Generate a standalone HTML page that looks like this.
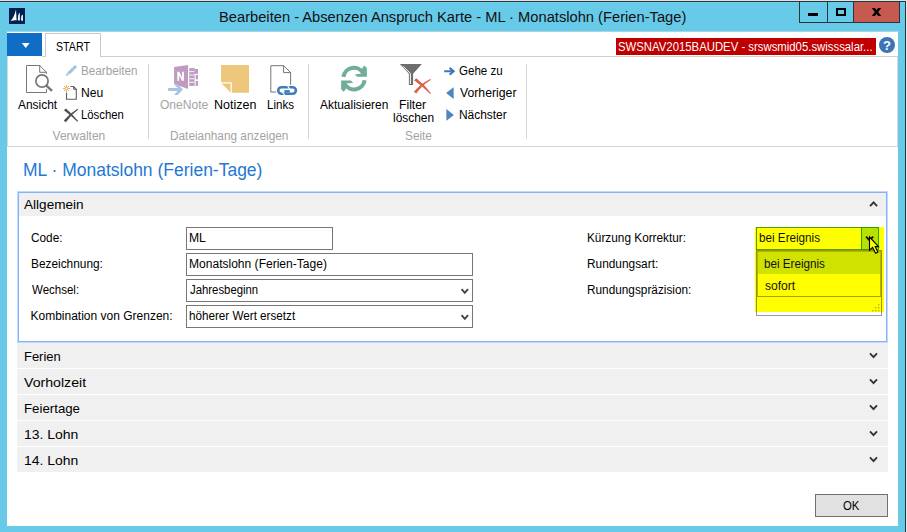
<!DOCTYPE html>
<html><head><meta charset="utf-8"><title>NAV</title><style>
html,body{margin:0;padding:0}
body{width:907px;height:532px;overflow:hidden;background:#67cae9;position:relative;font-family:"Liberation Sans",sans-serif}
div,span,svg{position:absolute;box-sizing:border-box}
.t{white-space:pre;line-height:20px;transform-origin:0 0;font-family:"Liberation Sans",sans-serif}
.sep{width:1px;top:64px;height:75px;background:#d6d6d6}
.inp{border:1px solid #767676;background:#fff;height:23px}
.band{left:17px;width:871px;height:25px;background:#f0f0f0}
</style></head><body>
<!-- window frame -->
<div style="left:0;top:0;width:907px;height:1px;background:#d7e5ea"></div>
<div style="left:0;top:1px;width:906px;height:1px;background:#2e3436"></div>
<div style="left:0;top:2px;width:905px;height:1px;background:#6fd2f1"></div>
<div style="left:905px;top:1px;width:1px;height:531px;background:#2e3436"></div>
<div style="left:906px;top:0;width:1px;height:532px;background:#e4e9ea"></div>

<!-- app icon -->
<svg style="left:9px;top:8px" width="16" height="16" viewBox="0 0 16 16">
 <rect width="16" height="16" fill="#002050"/>
 <path d="M1.2,13.2 C4,11 6,6 7,1.2 L7.6,12.2 C5,12.2 3,12.6 1.2,13.2 Z" fill="#fff"/>
 <path d="M8.8,12.3 L9.2,7.4 C9.6,6.2 10.2,5 10.7,4.4 L10.9,12.4 Z" fill="#fff"/>
 <path d="M12,12.6 L12.3,8.6 C12.7,7.8 13.3,7 13.8,6.6 L14,12.8 Z" fill="#fff"/>
</svg>

<!-- window controls -->
<div style="left:799px;top:2px;width:101px;height:21px;border:1px solid #2e3436;border-top:none;background:#67cae9"></div>
<div style="left:827px;top:2px;width:1px;height:20px;background:#2e3436"></div>
<div style="left:853px;top:2px;width:1px;height:20px;background:#2e3436"></div>
<div style="left:854px;top:2px;width:45px;height:20px;background:#c65a50"></div>
<div style="left:808px;top:13px;width:10px;height:3px;background:#000"></div>
<div style="left:836px;top:8px;width:10px;height:8px;border:2px solid #000"></div>
<svg style="left:870px;top:6px" width="14" height="12" viewBox="870 6 14 12"><path d="M871.8,8 H875 L876.5,10.2 L878,8 H881.2 L878.2,12 L881.2,16 H878 L876.5,13.8 L875,16 H871.8 L874.8,12 Z" fill="#000"/></svg>

<!-- client area -->
<div style="left:7px;top:31px;width:892px;height:1px;background:#a9d5e4"></div>
<div style="left:7px;top:32px;width:891px;height:494px;background:#fff"></div>
<div style="left:7px;top:56px;width:1px;height:91px;background:#d8d8d8"></div>
<div style="left:897px;top:56px;width:1px;height:91px;background:#d8d8d8"></div>

<!-- app button + tab -->
<div style="left:7px;top:33px;width:35px;height:23px;background:#0f6dc6"></div>
<svg style="left:20px;top:41px" width="12" height="9" viewBox="0 0 12 9"><path d="M1.8,2 L9.6,2 L5.7,7 Z" fill="#fff"/></svg>
<div style="left:42px;top:56px;width:856px;height:1px;background:#cfcfcf"></div>
<div style="left:45px;top:33px;width:56px;height:24px;border:1px solid #c9c9c9;border-bottom:none;background:#fff"></div>

<!-- red label + help -->
<div style="left:616px;top:38px;width:260px;height:17px;background:#c00000"></div>
<svg style="left:878px;top:36px" width="18" height="18" viewBox="0 0 18 18"><circle cx="9" cy="9" r="8" fill="#3d74b5"/>
<text x="9" y="13.6" font-family="Liberation Sans" font-weight="bold" font-size="13" fill="#fff" text-anchor="middle">?</text></svg>

<!-- ribbon -->
<div class="sep" style="left:148px"></div>
<div class="sep" style="left:308px"></div>
<div class="sep" style="left:526px"></div>
<div style="left:7px;top:146px;width:891px;height:1px;background:#d4d4d4"></div>

<!-- Ansicht icon -->
<svg style="left:24px;top:63px" width="32" height="32" viewBox="24 63 32 32">
 <path d="M46.5,73.8 V72.3 L39.7,65.5 H26.5 V92.5 H46.5 V89" fill="none" stroke="#767676" stroke-width="1"/>
 <path d="M39.7,65.5 V72.3 H46.5" fill="none" stroke="#767676" stroke-width="1"/>
 <circle cx="42" cy="81" r="6.1" fill="#fff" stroke="#767676" stroke-width="1.7"/>
 <path d="M46.4,85.6 L52,90.8" stroke="#767676" stroke-width="2.4" fill="none"/>
</svg>
<!-- pencil -->
<svg style="left:64px;top:64px" width="14" height="14" viewBox="64 64 14 14">
 <path d="M65.7,76.1 L66.9,72.8 L69.1,75 Z" fill="#a4c2e3"/>
 <path d="M68.4,73.5 L73.4,68.7" stroke="#a4c2e3" stroke-width="3.1" fill="none"/>
 <path d="M74.4,67.7 L75.2,66.95" stroke="#a4c2e3" stroke-width="3.1" fill="none" stroke-linecap="round"/>
</svg>
<!-- new -->
<svg style="left:62px;top:84px" width="17" height="17" viewBox="62 84 17 17">
 <path d="M66.5,92.6 V99.3 H76.3 V89.3 L73.6,86.5 H70.4" fill="none" stroke="#5f5f5f" stroke-width="1.1"/>
 <path d="M73.6,86.5 V89.3 H76.3" fill="none" stroke="#5f5f5f" stroke-width="1"/>
 <g stroke="#f0ad55" stroke-width="1" fill="none">
  <path d="M66.5,85 V92 M63,88.5 H70 M64,86 L69,91 M69,86 L64,91"/>
 </g>
 <circle cx="66.5" cy="88.5" r="1" fill="#fff"/>
</svg>
<!-- delete X -->
<svg style="left:62px;top:107px" width="18" height="16" viewBox="62 107 18 16">
 <path d="M63.9,110.3 L65.9,108.5 Q72.5,114 78.1,121.1 L77.3,121.8 Q71,115.6 63.9,110.3 Z" fill="#505050"/>
 <path d="M77.5,108.8 L78.3,109.6 Q71,114.8 65.9,122.2 L63.7,120.4 Q69.6,113.6 77.5,108.8 Z" fill="#505050"/>
</svg>
<!-- OneNote -->
<svg style="left:166px;top:63px" width="34" height="34" viewBox="166 63 34 34">
 <path d="M174.1,67.1 L188,64.9 V88.9 L174.1,84 Z" fill="#bf9bc1"/>
 <path d="M177.3,80.8 V71.8 H179.3 L182,77.4 V71.8 H183.9 V80.8 H181.9 L179.2,75.2 V80.8 Z" fill="#fff"/>
 <rect x="189.2" y="68.1" width="5.6" height="17.8" fill="#bf9bc1"/>
 <rect x="194.8" y="69" width="3.2" height="16.9" fill="#bf9bc1"/>
 <g fill="#fff"><rect x="189.2" y="71.2" width="5.2" height="0.9"/><rect x="189.2" y="74.6" width="5.2" height="0.9"/><rect x="189.2" y="78.3" width="5.2" height="0.9"/><rect x="189.2" y="81.8" width="5.2" height="0.9"/>
 <rect x="194.8" y="73.9" width="3.4" height="1.1"/><rect x="194.8" y="79.3" width="3.4" height="1.6"/><rect x="194.7" y="73.9" width="1" height="12"/></g>
 <path d="M168.1,88 H177.5 L174,84.2 H177.6 L183,89.6 L177.6,95 H174 L177.5,91.1 H168.1 Z" fill="#a9c4e0"/>
</svg>
<!-- Notizen -->
<svg style="left:220px;top:64px" width="30" height="30" viewBox="220 64 30 30">
 <path d="M221.1,65 H249 V92.7 H231.8 V82.2 H221.1 Z" fill="#edc77b"/>
 <path d="M221.6,83.6 H230.6 V92.6 Z" fill="#edc77b"/>
</svg>
<!-- Links -->
<svg style="left:268px;top:63px" width="32" height="34" viewBox="268 63 32 34">
 <path d="M276,92 H270.8 V65.7 H283.6 L290.6,72.6 V84.8" fill="none" stroke="#767676" stroke-width="1"/>
 <path d="M283.6,65.7 V72.6 H290.6" fill="none" stroke="#767676" stroke-width="1"/>
 <rect x="278.2" y="87.3" width="17.7" height="6.5" rx="3.25" fill="none" stroke="#3f7cbf" stroke-width="2.6"/>
 <path d="M284.2,90.2 L289.6,90 L290,92.6 L284.6,92.8 Z" fill="#3f7cbf"/>
 <path d="M287.5,85.6 L290.3,90" stroke="#fff" stroke-width="1.1" fill="none"/>
 <path d="M281.8,91.4 L284.8,95.4" stroke="#fff" stroke-width="1.1" fill="none"/>
</svg>
<!-- refresh -->
<svg style="left:339px;top:63px" width="30" height="31" viewBox="339 63 30 31">
 <g fill="none" stroke="#70ae99" stroke-width="4.1">
  <path d="M343.35,76.9 A10.65,10.65 0 0 1 363.2,73.3"/>
  <path d="M364.65,80.3 A10.65,10.65 0 0 1 344.8,83.9"/>
 </g>
 <path d="M354.7,74.4 L362,73.6 L362.2,68 L364.4,65.4 L366.9,68 V76.8 H357.2 Z" fill="#70ae99"/>
 <path d="M353.3,82.8 L346,83.6 L345.8,89.2 L343.6,91.8 L341.1,89.2 V80.4 H350.8 Z" fill="#70ae99"/>
</svg>
<!-- filter clear -->
<svg style="left:398px;top:62px" width="35" height="33" viewBox="398 62 35 33">
 <path d="M399.9,64.1 H421.9 L413.1,73.8 V84.9 H408.9 V73.8 Z" fill="#6e6e6e"/>
 <path d="M403.1,66.3 L410.4,73.4 V84" stroke="#fff" stroke-width="1" fill="none"/>
 <path d="M414,80.2 L416.3,78.3 Q424.5,84.5 431,93.2 L430.2,93.9 Q422.5,86.3 414,80.2 Z" fill="#d9634a"/>
 <path d="M430.2,78.9 L431,79.7 Q422,85.2 416.3,93.6 L413.8,91.7 Q420.5,83.8 430.2,78.9 Z" fill="#d9634a"/>
</svg>
<!-- nav arrows -->
<svg style="left:443px;top:65px" width="14" height="58" viewBox="443 65 14 58">
 <path d="M444.2,71.3 H453 M449.6,67.9 L453.6,71.3 L449.6,74.7" fill="none" stroke="#3c78b8" stroke-width="2.1"/>
 <path d="M453.6,87.3 V98.9 L446.1,93.1 Z" fill="#4d85bf"/>
 <path d="M446.4,109 V120.7 L453.9,114.9 Z" fill="#4d85bf"/>
</svg>

<!-- Allgemein fasttab -->
<div style="left:17px;top:191px;width:871px;height:152px;border:1px solid #c3d9fd;background:#fff"></div>
<div style="left:18px;top:192px;width:869px;height:150px;border:1px solid #86b1fb"></div>
<div style="left:19px;top:193px;width:867px;height:23px;background:#f0f0f0"></div>
<svg style="left:866px;top:198px" width="16" height="12" viewBox="866 198 16 12"><path d="M870.75,205.4 L873.6,202.4 L876.45,205.4" fill="none" stroke="#333" stroke-width="1.9" stroke-linecap="square" stroke-linejoin="miter"/></svg>

<div class="inp" style="left:186px;top:227px;width:147px"></div>
<div class="inp" style="left:186px;top:253px;width:287px"></div>
<div class="inp" style="left:186px;top:279px;width:287px"></div>
<div class="inp" style="left:186px;top:305px;width:287px"></div>
<svg style="left:458px;top:285px" width="14" height="40" viewBox="458 285 14 40"><path d="M462.2,289.9 L464.8,292.9 L467.40000000000003,289.9" fill="none" stroke="#444" stroke-width="1.9" stroke-linecap="square" stroke-linejoin="miter"/><path d="M462.2,315.9 L464.8,318.9 L467.40000000000003,315.9" fill="none" stroke="#444" stroke-width="1.9" stroke-linecap="square" stroke-linejoin="miter"/></svg>

<!-- popup base (white, grey border) then yellow marker, then pre-multiplied overlays -->
<div style="left:756px;top:250px;width:126px;height:66px;border:1px solid #9a9a9a;background:#fff"></div>
<div style="left:755px;top:227px;width:129px;height:85px;background:#ffff00"></div>
<!-- combo -->
<div style="left:756px;top:227px;width:123px;height:23px;border:1px solid #55a000"></div>
<div style="left:861px;top:227px;width:18px;height:23px;border:1px solid #2ca000;background:#b9e100"></div>
<svg style="left:863px;top:233px" width="14" height="12" viewBox="863 233 14 12"><path d="M866.75,237.3 L869.6,240.3 L872.45,237.3" fill="none" stroke="#111100" stroke-width="1.9" stroke-linecap="square" stroke-linejoin="miter"/></svg>
<!-- popup parts inside marker -->
<div style="left:756px;top:250px;width:126px;height:62px;border:1px solid #9a9a00;border-bottom:none"></div>
<div style="left:757px;top:251px;width:124px;height:46px;border:1px solid #b4b400;border-bottom:none"></div>
<div style="left:758px;top:252px;width:122px;height:22px;background:#d0e200"></div>
<div style="left:757px;top:296px;width:124px;height:1px;background:#a5a500"></div>
<svg style="left:872px;top:304px" width="9" height="9" viewBox="0 0 9 9"><g fill="#b9b900"><rect x="6" y="0" width="1.4" height="1.4"/><rect x="3" y="3" width="1.4" height="1.4"/><rect x="6" y="3" width="1.4" height="1.4"/><rect x="0" y="6" width="1.4" height="1.4"/><rect x="3" y="6" width="1.4" height="1.4"/><rect x="6" y="6" width="1.4" height="1.4"/></g></svg>

<!-- collapsed fasttabs -->
<div class="band" style="top:343px"></div>
<div class="band" style="top:369px"></div>
<div class="band" style="top:395px"></div>
<div class="band" style="top:421px"></div>
<div class="band" style="top:447px"></div>
<svg style="left:866px;top:345px" width="16" height="125" viewBox="866 345 16 125">
<path d="M870.65,354.1 L873.5,357.1 L876.35,354.1" fill="none" stroke="#333" stroke-width="1.9" stroke-linecap="square" stroke-linejoin="miter"/><path d="M870.65,380.1 L873.5,383.1 L876.35,380.1" fill="none" stroke="#333" stroke-width="1.9" stroke-linecap="square" stroke-linejoin="miter"/><path d="M870.65,406.1 L873.5,409.1 L876.35,406.1" fill="none" stroke="#333" stroke-width="1.9" stroke-linecap="square" stroke-linejoin="miter"/><path d="M870.65,432.1 L873.5,435.1 L876.35,432.1" fill="none" stroke="#333" stroke-width="1.9" stroke-linecap="square" stroke-linejoin="miter"/><path d="M870.65,458.1 L873.5,461.1 L876.35,458.1" fill="none" stroke="#333" stroke-width="1.9" stroke-linecap="square" stroke-linejoin="miter"/>
</svg>

<!-- OK -->
<div style="left:815px;top:494px;width:73px;height:23px;border:1px solid #707070;background:#e1e1e1"></div>

<!-- texts -->
<span class="t" style="left:219.00px;top:7px;font-size:14.67px;color:#111;transform:scaleX(1.0022)">Bearbeiten - Absenzen Anspruch Karte - ML · Monatslohn (Ferien-Tage)</span>
<span class="t" style="left:56.11px;top:37px;font-size:12px;color:#000;transform:scaleX(0.8865)">START</span>
<span class="t" style="left:618.35px;top:37px;font-size:12px;color:#fff;transform:scaleX(0.9457)">SWSNAV2015BAUDEV - srswsmid05.swisssalar...</span>
<span class="t" style="left:17.80px;top:95px;font-size:12px;color:#000;transform:scaleX(0.9949)">Ansicht</span>
<span class="t" style="left:81.03px;top:61px;font-size:12px;color:#a3a3a3;transform:scaleX(0.9732)">Bearbeiten</span>
<span class="t" style="left:80.99px;top:83px;font-size:12px;color:#000;transform:scaleX(1.0100)">Neu</span>
<span class="t" style="left:81.05px;top:105px;font-size:12px;color:#000;transform:scaleX(0.9455)">Löschen</span>
<span class="t" style="left:52.60px;top:126px;font-size:12px;color:#a3a3a3;transform:scaleX(1.0000)">Verwalten</span>
<span class="t" style="left:159.70px;top:95px;font-size:12px;color:#a3a3a3;transform:scaleX(1.0042)">OneNote</span>
<span class="t" style="left:213.86px;top:95px;font-size:12px;color:#000;transform:scaleX(1.0410)">Notizen</span>
<span class="t" style="left:266.84px;top:95px;font-size:12px;color:#000;transform:scaleX(0.9630)">Links</span>
<span class="t" style="left:170.21px;top:126px;font-size:12px;color:#a3a3a3;transform:scaleX(0.9857)">Dateianhang anzeigen</span>
<span class="t" style="left:320.00px;top:95px;font-size:12px;color:#000;transform:scaleX(0.9941)">Aktualisieren</span>
<span class="t" style="left:399.28px;top:95px;font-size:12px;color:#000;transform:scaleX(1.0154)">Filter</span>
<span class="t" style="left:393.00px;top:108px;font-size:12px;color:#000;transform:scaleX(0.9950)">löschen</span>
<span class="t" style="left:405.42px;top:126px;font-size:12px;color:#a3a3a3;transform:scaleX(0.9846)">Seite</span>
<span class="t" style="left:459.34px;top:61px;font-size:12px;color:#000;transform:scaleX(0.9636)">Gehe zu</span>
<span class="t" style="left:460.30px;top:83px;font-size:12px;color:#000;transform:scaleX(1.0200)">Vorheriger</span>
<span class="t" style="left:459.31px;top:105px;font-size:12px;color:#000;transform:scaleX(0.9936)">Nächster</span>
<span class="t" style="left:22.76px;top:160px;font-size:18.67px;color:#1f78d2;transform:scaleX(0.9374)">ML · Monatslohn (Ferien-Tage)</span>
<span class="t" style="left:23.90px;top:195px;font-size:13.33px;color:#000;transform:scaleX(1.0190)">Allgemein</span>
<span class="t" style="left:31.22px;top:228px;font-size:12px;color:#000;transform:scaleX(0.9833)">Code:</span>
<span class="t" style="left:30.51px;top:254px;font-size:12px;color:#000;transform:scaleX(0.9887)">Bezeichnung:</span>
<span class="t" style="left:31.50px;top:280px;font-size:12px;color:#000;transform:scaleX(0.9583)">Wechsel:</span>
<span class="t" style="left:30.50px;top:306px;font-size:12px;color:#000;transform:scaleX(1.0000)">Kombination von Grenzen:</span>
<span class="t" style="left:188.99px;top:228px;font-size:12px;color:#000;transform:scaleX(1.0125)">ML</span>
<span class="t" style="left:189.00px;top:254px;font-size:12px;color:#000;transform:scaleX(1.0037)">Monatslohn (Ferien-Tage)</span>
<span class="t" style="left:189.60px;top:280px;font-size:12px;color:#000;transform:scaleX(0.9458)">Jahresbeginn</span>
<span class="t" style="left:189.03px;top:306px;font-size:12px;color:#000;transform:scaleX(0.9722)">höherer Wert ersetzt</span>
<span class="t" style="left:587.22px;top:228px;font-size:12px;color:#000;transform:scaleX(0.9838)">Kürzung Korrektur:</span>
<span class="t" style="left:587.21px;top:254px;font-size:12px;color:#000;transform:scaleX(0.9886)">Rundungsart:</span>
<span class="t" style="left:587.22px;top:280px;font-size:12px;color:#000;transform:scaleX(0.9837)">Rundungspräzision:</span>
<span class="t" style="left:758.63px;top:228px;font-size:12px;color:#111;transform:scaleX(0.9738)">bei Ereignis</span>
<span class="t" style="left:764.03px;top:254px;font-size:12px;color:#111;transform:scaleX(0.9721)">bei Ereignis</span>
<span class="t" style="left:765.00px;top:276px;font-size:12px;color:#111;transform:scaleX(1.0067)">sofort</span>
<span class="t" style="left:24.03px;top:347px;font-size:13.33px;color:#000;transform:scaleX(0.9722)">Ferien</span>
<span class="t" style="left:23.70px;top:373px;font-size:13.33px;color:#000;transform:scaleX(1.0603)">Vorholzeit</span>
<span class="t" style="left:24.01px;top:399px;font-size:13.33px;color:#000;transform:scaleX(0.9945)">Feiertage</span>
<span class="t" style="left:24.25px;top:425px;font-size:13.33px;color:#000;transform:scaleX(1.0460)">13. Lohn</span>
<span class="t" style="left:24.25px;top:451px;font-size:13.33px;color:#000;transform:scaleX(1.0460)">14. Lohn</span>
<span class="t" style="left:843.20px;top:496px;font-size:12px;color:#000;transform:scaleX(0.9471)">OK</span>

<!-- yellow highlighter (multiply) -->


<!-- cursor (white x yellow marker = yellow) -->
<svg style="left:866px;top:234px" width="16" height="24" viewBox="866 234 16 24">
 <path d="M869.5,237 V250.2 L872.6,247.4 L875.6,253.3 L877.9,252.3 L875.2,246.6 H878.6 Z" fill="#ffff00" stroke="#000" stroke-width="1.1" stroke-linejoin="miter"/>
</svg>
</body></html>
